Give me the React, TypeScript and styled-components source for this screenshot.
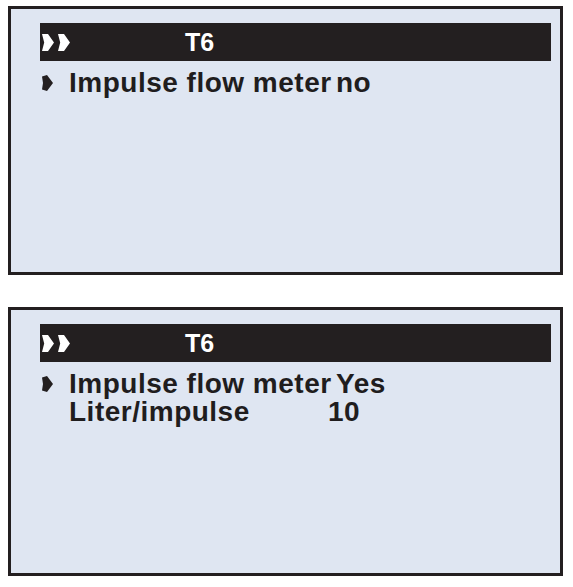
import styled, { createGlobalStyle } from "styled-components";

const GlobalStyle = createGlobalStyle`
  html, body {
    margin: 0;
    padding: 0;
    background: #ffffff;
  }
  body {
    font-family: "Liberation Sans", Arial, sans-serif;
  }
`;

const Page = styled.div`
  display: flex;
  flex-direction: column;
  gap: 32px;
  padding: 6px 10px 0 8px;
`;

const Panel = styled.div`
  box-sizing: border-box;
  width: 555px;
  height: 269px;
  border: 3px solid #231f20;
  background: #dfe6f2;
  padding: 14px 9px 0 29px;
  display: flex;
  flex-direction: column;
`;

const Header = styled.div`
  height: 38px;
  background: #231f20;
  display: flex;
  align-items: center;
  padding-left: 2px;
  margin-bottom: 8px;
`;

const HeaderArrows = styled.div`
  display: flex;
  gap: 4px;
  width: 143px;
`;

const HeaderTitle = styled.span`
  color: #ffffff;
  font-weight: bold;
  font-size: 25px;
`;

const Row = styled.div`
  display: grid;
  grid-template-columns: 29px 267px auto;
  align-items: center;
  height: 28px;
  font-size: 28px;
  letter-spacing: 0.5px;
  font-weight: bold;
  color: #1f1d1e;
  line-height: 28px;
  white-space: nowrap;
`;

const Marker = styled.span`
  display: flex;
  align-items: center;
  padding-left: 2px;
`;

const Value = styled.span<{ $shift?: number }>`
  margin-left: ${(p) => p.$shift ?? 0}px;
`;

const HeadArrow = () => (
  <svg width="12" height="17" viewBox="0 0 12 17">
    <polygon points="0,0 6,0 12,8.5 6,17 0,17 2.2,8.5" fill="#ffffff" />
  </svg>
);

const RowArrow = () => (
  <svg width="11" height="16" viewBox="0 0 11 16">
    <polygon points="0,1.5 5,0 11,8 5,16 0,14.5 1,8" fill="#231f20" />
  </svg>
);

type Item = { label: string; value: string; active?: boolean; shift?: number };

const Screen = ({ items }: { items: Item[] }) => (
  <Panel>
    <Header>
      <HeaderArrows>
        <HeadArrow />
        <HeadArrow />
      </HeaderArrows>
      <HeaderTitle>T6</HeaderTitle>
    </Header>
    {items.map((it) => (
      <Row key={it.label}>
        <Marker>{it.active ? <RowArrow /> : null}</Marker>
        <span>{it.label}</span>
        <Value $shift={it.shift}>{it.value}</Value>
      </Row>
    ))}
  </Panel>
);

export default function App() {
  return (
    <>
      <GlobalStyle />
      <Page>
        <Screen items={[{ label: "Impulse flow meter", value: "no", active: true }]} />
        <Screen
          items={[
            { label: "Impulse flow meter", value: "Yes", active: true },
            { label: "Liter/impulse", value: "10", shift: -8 },
          ]}
        />
      </Page>
    </>
  );
}
